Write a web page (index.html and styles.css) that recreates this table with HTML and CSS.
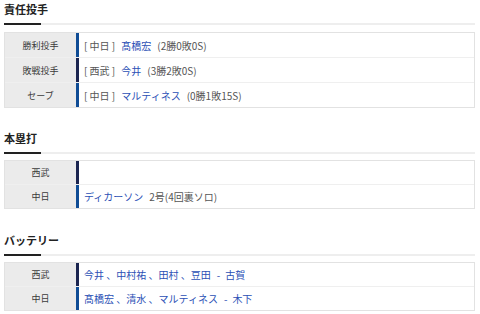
FILE: index.html
```html
<!DOCTYPE html>
<html lang="ja">
<head>
<meta charset="utf-8">
<link rel="stylesheet" href="styles.css">
</head>
<body>
<div class="page">
  <section class="sec">
    <h2 class="ttl">責任投手</h2>
    <div class="rule"></div>
    <div class="tbl">
      <div class="row">
        <div class="lbl">勝利投手</div>
        <div class="val d"><span class="team">[ 中日 ]</span><a class="lnk">髙橋宏</a><span class="st">(2勝0敗0S)</span></div>
      </div>
      <div class="row">
        <div class="lbl">敗戦投手</div>
        <div class="val l"><span class="team">[ 西武 ]</span><a class="lnk">今井</a><span class="st">(3勝2敗0S)</span></div>
      </div>
      <div class="row">
        <div class="lbl">セーブ</div>
        <div class="val d"><span class="team">[ 中日 ]</span><a class="lnk">マルティネス</a><span class="st">(0勝1敗15S)</span></div>
      </div>
    </div>
  </section>
  <section class="sec compact">
    <h2 class="ttl">本塁打</h2>
    <div class="rule"></div>
    <div class="tbl">
      <div class="row">
        <div class="lbl">西武</div>
        <div class="val l"></div>
      </div>
      <div class="row">
        <div class="lbl">中日</div>
        <div class="val d"><a class="lnk">ディカーソン</a><span class="st">2号(4回裏ソロ)</span></div>
      </div>
    </div>
  </section>
  <section class="sec compact">
    <h2 class="ttl">バッテリー</h2>
    <div class="rule"></div>
    <div class="tbl">
      <div class="row">
        <div class="lbl">西武</div>
        <div class="val l"><span class="bat">今井 、中村祐 、田村 、豆田<span class="dash">-</span>古賀</span></div>
      </div>
      <div class="row">
        <div class="lbl">中日</div>
        <div class="val d"><span class="bat">髙橋宏 、清水 、マルティネス<span class="dash">-</span>木下</span></div>
      </div>
    </div>
  </section>
</div>
</body>
</html>
```
FILE: styles.css
```css
html, body {
  margin: 0;
  padding: 0;
  background: #fff;
}
body {
  font-family: "Noto Sans CJK JP", "Noto Sans", sans-serif;
  color: #333;
}
.page {
  padding: 0 5px 0 4px;
}
.sec {
  margin-bottom: 21px;
}
.sec.compact {
  margin-bottom: 22px;
}
.sec:last-child {
  margin-bottom: 0;
}
.ttl {
  margin: 0;
  font-size: 11px;
  line-height: 18px;
  font-weight: bold;
  color: #222;
  padding-bottom: 5px;
}
.rule {
  height: 2px;
  background: linear-gradient(to right, #222 37px, #eeeeee 37px);
  margin-bottom: 7px;
}
.compact .rule {
  margin-bottom: 6px;
}
.tbl {
  border: 1px solid #e2e2e2;
}
.row {
  display: flex;
  height: 24px;
}
.compact .row {
  height: 23px;
}
.row + .row {
  border-top: 1px solid #efefef;
}
.lbl {
  width: 71px;
  flex: none;
  background: #ebebeb;
  font-size: 9px;
  color: #3a3a3a;
  display: flex;
  align-items: center;
  justify-content: center;
}
.val {
  flex: 1;
  border-left: 3px solid #0f4c95;
  padding-left: 5px;
  display: flex;
  align-items: center;
  font-size: 10px;
  white-space: pre;
}
.val.d { border-left-color: #0f4c95; }
.val.l { border-left-color: #1b2550; }
.team {
  color: #555;
  margin-right: 6px;
}
.lnk {
  color: #2b4fb5;
  margin-right: 6px;
}
.st {
  color: #555;
}
.bat {
  color: #2b4fb5;
}
.dash {
  margin: 0 5px 0 6px;
}
```
